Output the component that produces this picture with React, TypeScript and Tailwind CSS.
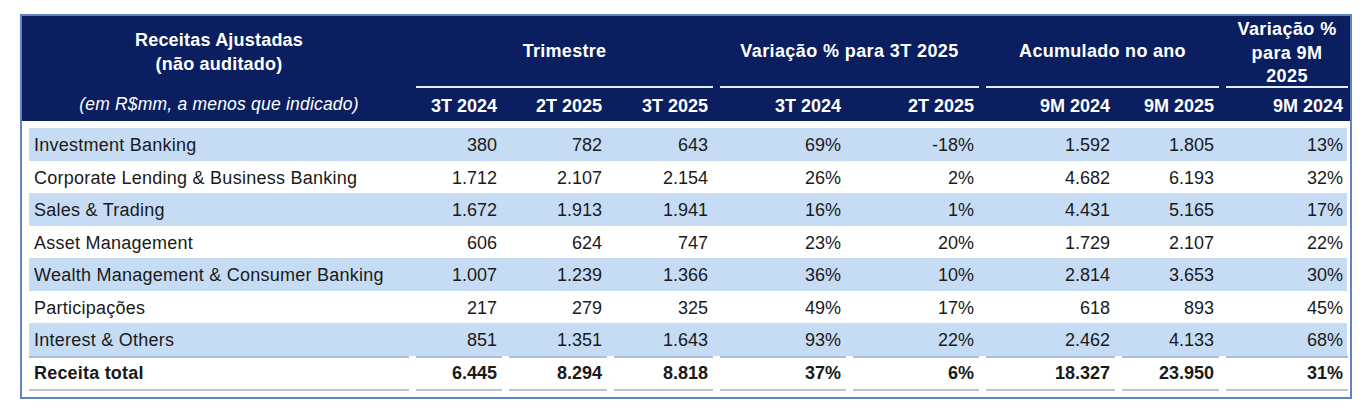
import React from "react";

const rows: [string, string[]][] = [
  ["Investment Banking", ["380", "782", "643", "69%", "-18%", "1.592", "1.805", "13%"]],
  ["Corporate Lending & Business Banking", ["1.712", "2.107", "2.154", "26%", "2%", "4.682", "6.193", "32%"]],
  ["Sales & Trading", ["1.672", "1.913", "1.941", "16%", "1%", "4.431", "5.165", "17%"]],
  ["Asset Management", ["606", "624", "747", "23%", "20%", "1.729", "2.107", "22%"]],
  ["Wealth Management & Consumer Banking", ["1.007", "1.239", "1.366", "36%", "10%", "2.814", "3.653", "30%"]],
  ["Participações", ["217", "279", "325", "49%", "17%", "618", "893", "45%"]],
  ["Interest & Others", ["851", "1.351", "1.643", "93%", "22%", "2.462", "4.133", "68%"]],
];

const total: string[] = ["6.445", "8.294", "8.818", "37%", "6%", "18.327", "23.950", "31%"];

const GRID = "grid grid-cols-[380px_86px_98px_99px_126px_126px_129px_97px_122px] gap-x-[7px]";

function LineRow({ color }: { color: string }) {
  return (
    <div className={GRID}>
      {Array.from({ length: 9 }).map((_, i) => (
        <div key={i} className={`h-[2px] ${color}`} />
      ))}
    </div>
  );
}

export default function App() {
  return (
    <div className="bg-white w-[1366px] h-[412px] pt-[14px] pl-[20px]" style={{ fontFamily: '"Liberation Sans", Arial, sans-serif' }}>
      <div className="w-[1332px] border-2 border-[#6283c2] bg-white">
        {/* Header */}
        <div className="bg-[#0b1f60] h-[105px] pl-[7px] text-white font-bold text-[18px]">
          <div className={`${GRID} grid-rows-[70px_2px_33px] h-full`}>
            <div className="row-span-3 flex flex-col items-center pt-[13px] leading-[23.5px] tracking-[0.2px]">
              <div>Receitas Ajustadas</div>
              <div>(não auditado)</div>
              <div className="mt-auto mb-[5px] italic font-normal text-[17.5px] tracking-[0.2px]">
                (em R$mm, a menos que indicado)
              </div>
            </div>
            <div className="col-span-3 flex items-center justify-center tracking-[0.3px]">Trimestre</div>
            <div className="col-span-2 flex items-center justify-center tracking-[0.4px]">Variação % para 3T 2025</div>
            <div className="col-span-2 flex items-center justify-center tracking-[0.3px]">Acumulado no ano</div>
            <div className="flex flex-col items-center justify-center text-center leading-[23.5px] pt-[5px] tracking-[0.4px]">
              <span>Variação %</span>
              <span>para 9M</span>
              <span>2025</span>
            </div>
            <div className="col-span-3 bg-[#e6ecf7]" />
            <div className="col-span-2 bg-[#e6ecf7]" />
            <div className="col-span-2 bg-[#e6ecf7]" />
            <div className="bg-[#e6ecf7]" />
            {["3T 2024", "2T 2025", "3T 2025", "3T 2024", "2T 2025", "9M 2024", "9M 2025", "9M 2024"].map((h, i) => (
              <div key={i} className="flex items-center justify-end pr-[5px] pt-[3px]">
                {h}
              </div>
            ))}
          </div>
        </div>

        {/* Body */}
        <div className="pl-[7px] pr-[3px] pt-[7px] pb-[6px] text-[18px] text-[#1a1a1a]">
          {rows.map(([label, vals], r) => (
            <div key={r} className={`${GRID} h-[32.5px] items-center pt-[3px] ${r % 2 === 0 ? "bg-[#c6dcf4]" : "bg-white"}`}>
              <div className="pl-[5px] whitespace-nowrap tracking-[0.25px]">{label}</div>
              {vals.map((v, i) => (
                <div key={i} className="text-right pr-[5px]">
                  {v}
                </div>
              ))}
            </div>
          ))}
          <LineRow color="bg-[#a9bfdf]" />
          <div className={`${GRID} h-[31.5px] items-center font-bold`}>
            <div className="pl-[5px] tracking-[0.2px]">Receita total</div>
            {total.map((v, i) => (
              <div key={i} className="text-right pr-[5px]">
                {v}
              </div>
            ))}
          </div>
          <LineRow color="bg-[#b4c4e2]" />
        </div>
      </div>
    </div>
  );
}
